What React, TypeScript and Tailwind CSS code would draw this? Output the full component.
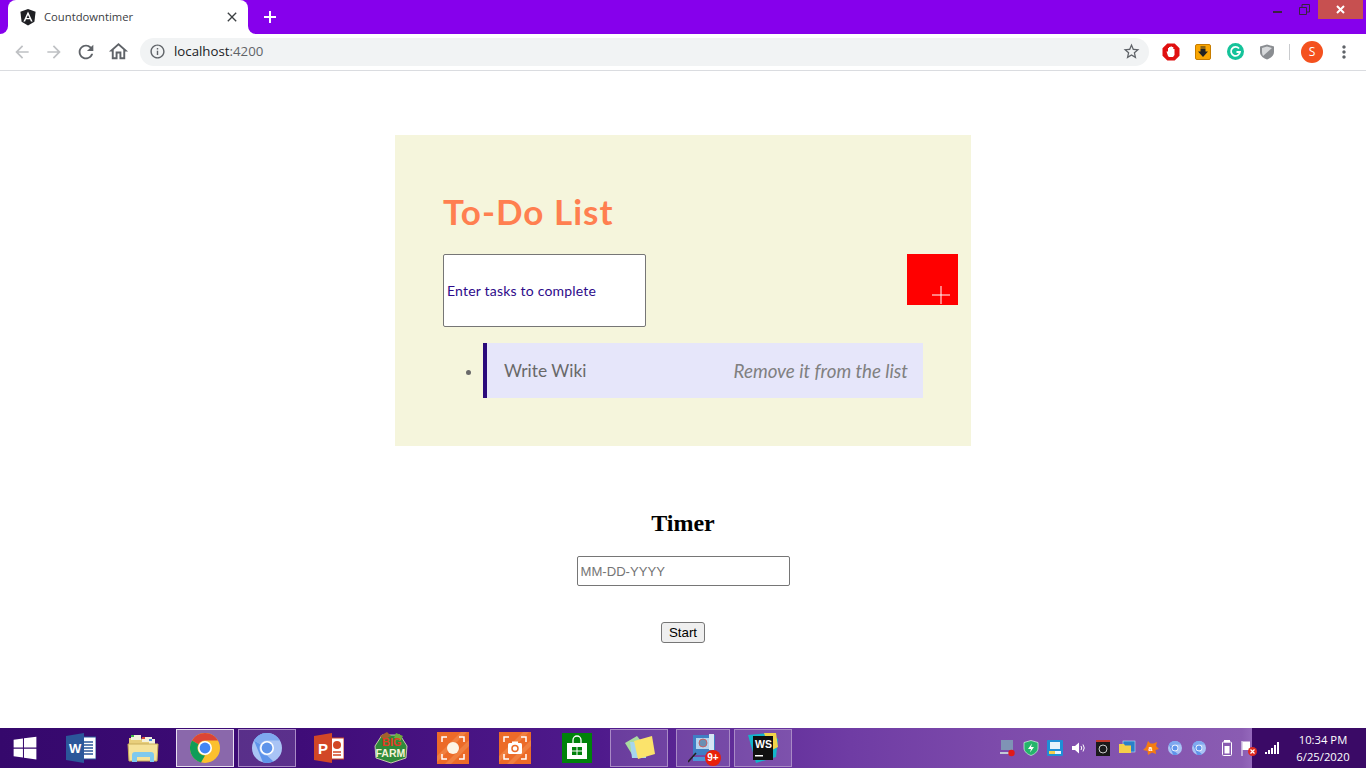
import React from 'react';
import { FaWindows } from 'react-icons/fa';
import {
  MdArrowBack,
  MdArrowForward,
  MdClose,
  MdInfoOutline,
  MdMoreVert,
  MdOutlineHome,
  MdRefresh,
  MdStarBorder,
} from 'react-icons/md';

const comic = "font-['Comic_Sans_MS','Lato','Open_Sans',sans-serif]";

const AngularLogo = () => (
  <svg width="16" height="17" viewBox="0 0 16 17">
    <path d="M8 0 L15.6 2.7 L14.4 12.8 L8 16.6 L1.6 12.8 L0.4 2.7 Z" fill="#1f2024" />
    <path d="M8 2.4 L3.4 12.6 H5.1 L6 10.3 H10 L10.9 12.6 H12.6 Z M8 6 L9.4 9 H6.6 Z" fill="#fff" fillRule="evenodd" />
  </svg>
);

const ChromeIcon = () => (
  <svg width="30" height="30" viewBox="0 0 30 30">
    <circle cx="15" cy="15" r="15" fill="#fbc02d" />
    <path d="M15 0 A15 15 0 0 1 28 7.5 H15 A7.5 7.5 0 0 0 8.5 11.2 L2 7.5 A15 15 0 0 1 15 0 Z" fill="#db4437" />
    <path d="M2 7.5 L8.5 11.2 A7.5 7.5 0 0 0 15 22.5 L11 29.5 A15 15 0 0 1 2 7.5 Z" fill="#0f9d58" />
    <circle cx="15" cy="15" r="7" fill="#fff" />
    <circle cx="15" cy="15" r="5.4" fill="#4285f4" />
  </svg>
);

const ChromiumIcon = ({ size = 30 }: { size?: number }) => (
  <svg width={size} height={size} viewBox="0 0 30 30">
    <circle cx="15" cy="15" r="15" fill="#a9c4f5" />
    <path d="M15 0 A15 15 0 0 0 2 7.5 L11 29.5 A15 15 0 0 0 15 30 A15 15 0 0 0 21.5 28.5 L15 22.5 A7.5 7.5 0 0 1 8.5 11.2 L2 7.5 Z" fill="#5f94ea" />
    <path d="M15 0 A15 15 0 0 1 28 7.5 H15 A7.5 7.5 0 0 0 8.5 11.2 L2 7.5 A15 15 0 0 1 15 0 Z" fill="#7fa9ef" />
    <circle cx="15" cy="15" r="7" fill="#fff" />
    <circle cx="15" cy="15" r="5.4" fill="#5f94ea" />
  </svg>
);

const WordIcon = () => (
  <svg width="30" height="30" viewBox="0 0 30 30">
    <rect x="15" y="4" width="15" height="22" fill="#fff" stroke="#2b579a" />
    <path d="M18 9h9M18 12h9M18 15h9M18 18h9M18 21h9" stroke="#2b579a" strokeWidth="1.4" />
    <path d="M0 3 L18 0 V30 L0 27 Z" fill="#2b579a" />
    <text x="3" y="20" fontSize="13" fontWeight="700" fill="#fff" fontFamily="Liberation Sans">W</text>
  </svg>
);

const PowerPointIcon = () => (
  <svg width="30" height="30" viewBox="0 0 30 30">
    <rect x="15" y="5" width="15" height="21" fill="#fff" stroke="#d24726" />
    <circle cx="23" cy="12" r="4" fill="#d24726" />
    <path d="M19 19h8M19 22h8" stroke="#d24726" strokeWidth="1.4" />
    <path d="M0 3 L18 0 V30 L0 27 Z" fill="#d24726" />
    <text x="4" y="21" fontSize="15" fontWeight="700" fill="#fff" fontFamily="Liberation Sans">P</text>
  </svg>
);

const FolderIcon = () => (
  <svg width="32" height="30" viewBox="0 0 32 30">
    <path d="M2 5 H14 L16 8 H28 V12 H2 Z" fill="#e8cf7c" />
    <rect x="4" y="2" width="10" height="5" fill="#f4f1dc" />
    <rect x="4" y="2" width="3" height="2" fill="#3db54a" />
    <rect x="15" y="4" width="10" height="5" fill="#f4f1dc" />
    <rect x="15" y="4" width="3" height="2" fill="#d8483a" />
    <rect x="22" y="6" width="6" height="5" fill="#f4f1dc" />
    <rect x="22" y="6" width="3" height="2" fill="#4a90e2" />
    <path d="M1 11 H31 L30 28 H2 Z" fill="#f5e29a" stroke="#c9ad5a" />
    <path d="M5 29 V22 Q5 19 8 19 H24 Q27 19 27 22 V29 H23 V24 H10 V29 Z" fill="#7ec9ee" />
  </svg>
);

const BigFarmIcon = () => (
  <svg width="34" height="32" viewBox="0 0 34 32">
    <path d="M8 3 L26 3 L33 14 L32 26 L17 31 L2 26 L1 14 Z" fill="#2f8a3a" stroke="#e9e4c0" strokeWidth="0.8" />
    <path d="M6 4 L13 0 L17 4 L10 8 Z" fill="#a1622a" />
    <path d="M22 1 L29 4 L26 9 L20 6 Z" fill="#6fae3c" />
    <text x="8" y="14" fontSize="11" fontWeight="700" fill="#e53a26" fontFamily="Liberation Sans">BIG</text>
    <text x="1.5" y="25" fontSize="10.5" fontWeight="700" fill="#f6f3d8" fontFamily="Liberation Sans">FARM</text>
  </svg>
);

const RecorderIcon = ({ camera }: { camera?: boolean }) => (
  <svg width="32" height="32" viewBox="0 0 32 32">
    <rect width="32" height="32" fill="#ec6b28" />
    <path d="M0 24 L24 0 H30 L0 30 Z M8 32 L32 8 V14 L14 32 Z" fill="#f08040" />
    <path d="M5 10 V5 H10 M22 5 H27 V10 M27 22 V27 H22 M10 27 H5 V22" fill="none" stroke="#fff" strokeWidth="1.5" />
    {camera ? (
      <>
        <rect x="9" y="11" width="14" height="11" rx="1.5" fill="#fff" />
        <rect x="13" y="9.5" width="6" height="3" fill="#fff" />
        <circle cx="16" cy="16.5" r="3" fill="none" stroke="#ec6b28" strokeWidth="1.5" />
      </>
    ) : (
      <circle cx="16" cy="16" r="6" fill="#fdf5e6" />
    )}
  </svg>
);

const StoreIcon = () => (
  <svg width="30" height="30" viewBox="0 0 30 30">
    <rect width="30" height="30" fill="#00820a" />
    <path d="M11 10 V7 A4 4 0 0 1 19 7 V10" fill="none" stroke="#fff" strokeWidth="1.3" />
    <path d="M5 10 H25 V26 H5 Z" fill="#fff" />
    <path d="M10 14 H14.5 V17.5 H10 Z M15.5 14 H20 V17.5 H15.5 Z M10 18.5 H14.5 V22 H10 Z M15.5 18.5 H20 V22 H15.5 Z" fill="#00820a" />
  </svg>
);

const StickyIcon = () => (
  <svg width="32" height="28" viewBox="0 0 32 28">
    <path d="M2 9 L14 2 L22 12 L10 22 Z" fill="#a9dba0" />
    <path d="M7 8 H23 V24 H9 Z" fill="#a7d6ee" />
    <path d="M11 7 L29 2 L32 20 L15 25 Z" fill="#fbe36b" />
  </svg>
);

const ToolsIcon = () => (
  <div className="relative w-[30px] h-[30px]">
    <svg width="30" height="30" viewBox="0 0 30 30">
      <rect x="5" y="2" width="22" height="20" fill="#3f7fc4" />
      <rect x="8" y="5" width="14" height="11" fill="#b3d4ef" />
      <circle cx="15" cy="10" r="4" fill="#6a8fb3" stroke="#d9534f" strokeWidth="0.8" />
      <rect x="21" y="1" width="5" height="16" fill="#d7e6f3" />
      <path d="M0 29 L8 20" stroke="#222" strokeWidth="1.6" />
      <path d="M5 24 H28 V28 H5 Z" fill="#4e95d6" />
    </svg>
    <span className="absolute right-[-3px] bottom-[-3px] w-[16px] h-[16px] rounded-full bg-[#e8210b] flex items-center justify-center text-white text-[10px] font-bold font-['Liberation_Sans',sans-serif] leading-none">
      9+
    </span>
  </div>
);

const WebStormIcon = () => (
  <svg width="30" height="30" viewBox="0 0 30 30">
    <path d="M0 2 L22 0 L30 6 L28 24 L8 30 Z" fill="#13b6c9" />
    <path d="M16 0 H28 L30 14 L22 18 Z" fill="#f2d34a" />
    <rect x="5" y="3" width="20" height="24" fill="#101010" />
    <text x="7" y="15" fontSize="10.5" fontWeight="700" fill="#fff" fontFamily="Liberation Sans">WS</text>
    <rect x="7" y="22" width="8" height="1.5" fill="#fff" />
  </svg>
);

const AbpIcon = () => (
  <svg width="18" height="18" viewBox="0 0 18 18">
    <path d="M5.3 0.5 H12.7 L17.5 5.3 V12.7 L12.7 17.5 H5.3 L0.5 12.7 V5.3 Z" fill="#e01010" />
    <path d="M6 13 L4.5 8.5 L6 8.5 V5 H7 V4 H8.5 V3.5 H10 V4 H11.3 V6 H12.5 V12 L11 14 H7 Z" fill="#fff" />
  </svg>
);

const DownloaderIcon = () => (
  <svg width="16" height="16" viewBox="0 0 16 16">
    <rect x="0.5" y="0.5" width="15" height="15" rx="1.5" fill="#f9a602" stroke="#c77d00" />
    <path d="M5.5 2.5 H10.5 V3.5 H5.5 Z M5.5 4.5 H10.5 V7.5 H13 L8 13 L3 7.5 H5.5 Z" fill="#222" />
  </svg>
);

const GrammarlyIcon = () => (
  <svg width="17" height="17" viewBox="0 0 17 17">
    <circle cx="8.5" cy="8.5" r="8.5" fill="#15c39a" />
    <path d="M12 5.5 A4.5 4.5 0 1 0 13 9 H9.5" fill="none" stroke="#fff" strokeWidth="1.8" />
  </svg>
);

const ShieldIcon = ({ size = 16, fill = '#8a8d91' }: { size?: number; fill?: string }) => (
  <svg width={size} height={size} viewBox="0 0 16 16">
    <path d="M8 0.5 L15 2.5 V8 C15 12 11 14.5 8 15.5 C5 14.5 1 12 1 8 V2.5 Z" fill={fill} />
    <path d="M8 2.5 L13 4 L4 12 Q3 10 3 8 V4 Z" fill="#d7d9db" />
  </svg>
);

const trayIcons = [
  <svg key="a" width="18" height="18" viewBox="0 0 18 18">
    <rect x="3" y="1" width="12" height="10" fill="#7f93b5" />
    <path d="M2 13 H12 V15 H2 Z" fill="#c2c9d6" />
    <circle cx="13.5" cy="14" r="3.2" fill="#e11919" />
  </svg>,
  <svg key="b" width="16" height="16" viewBox="0 0 16 16">
    <path d="M8 0.5 L15 2.5 V8 C15 12 11 14.5 8 15.5 C5 14.5 1 12 1 8 V2.5 Z" fill="#24b56b" stroke="#d6f5e4" strokeWidth="0.7" />
    <path d="M9 3.5 L5 9 H8 L7 12.5 L11 7 H8 Z" fill="#fff" />
  </svg>,
  <svg key="c" width="16" height="16" viewBox="0 0 16 16">
    <rect width="16" height="16" rx="1" fill="#1f8fd6" />
    <rect x="3" y="2" width="10" height="7" fill="#e5f3fb" />
    <path d="M2 11 H14 V14 H2 Z" fill="#f3d04e" />
    <path d="M8 11 H14 V14 H8 Z" fill="#e5f3fb" />
  </svg>,
  <svg key="d" width="16" height="16" viewBox="0 0 16 16" fill="none" stroke="#fff">
    <path d="M1 6 H4 L8 2.5 V13.5 L4 10 H1 Z" fill="#fff" stroke="none" />
    <path d="M10 6 Q11.5 8 10 10 M12 4.5 Q14.5 8 12 11.5" strokeWidth="1" />
  </svg>,
  <svg key="e" width="14" height="16" viewBox="0 0 14 16">
    <rect width="14" height="16" fill="#1a1a1a" />
    <rect width="14" height="2" fill="#c0392b" />
    <circle cx="7" cy="9" r="4" fill="none" stroke="#c8c8c8" strokeWidth="1" />
  </svg>,
  <svg key="f" width="18" height="16" viewBox="0 0 18 16">
    <rect x="5" y="1" width="12" height="11" fill="#2a7fc9" stroke="#bfe0f5" strokeWidth="0.6" />
    <path d="M1 4 H6 L7 5.5 H13 V13 H1 Z" fill="#f5cf4a" />
  </svg>,
  <svg key="g" width="16" height="16" viewBox="0 0 16 16">
    <path d="M5 1 L7.5 3.5 H10.5 L14 2 L13 6 L16 9 L12.5 10 L13 14 L9 12.5 L5 15 L4.5 11 L0 10 L3 7 Z" fill="#f57c12" />
    <text x="5.4" y="10.5" fontSize="7" fontWeight="700" fill="#fff" fontFamily="Liberation Sans">a</text>
  </svg>,
  <ChromiumIcon key="h" size={14} />,
  <ChromiumIcon key="i" size={14} />,
];

const TaskSlot = ({ children, boxed, active, className = 'w-[58px] mx-[2px]' }: { children: React.ReactNode; boxed?: boolean; active?: boolean; className?: string }) => (
  <div
    className={`h-[38px] shrink-0 flex items-center justify-center border ${className} ${
      active
        ? 'border-[#e8dff0] bg-[#8a68ab]'
        : boxed
          ? 'border-[#a98ac6] bg-white/15'
          : 'border-transparent'
    }`}
  >
    {children}
  </div>
);

export default function App() {
  return (
    <div className="h-screen w-[1366px] overflow-hidden flex flex-col bg-white font-['Liberation_Sans',sans-serif]">
      {/* Tab strip */}
      <div className="h-[34px] shrink-0 bg-[#8600ec] flex items-stretch relative">
        <div className="relative ml-[8px] w-[240px] bg-white rounded-t-[8px] flex items-center pl-[12px] pr-[8px]">
          <span className="absolute left-[-8px] bottom-0 w-[8px] h-[8px] bg-white">
            <span className="block w-full h-full bg-[#8600ec] rounded-br-[8px]" />
          </span>
          <span className="absolute right-[-8px] bottom-0 w-[8px] h-[8px] bg-white">
            <span className="block w-full h-full bg-[#8600ec] rounded-bl-[8px]" />
          </span>
          <AngularLogo />
          <span className="ml-[8px] flex-1 text-[11.25px] text-[#3c4043] font-['Open_Sans',sans-serif]">Countdowntimer</span>
          <MdClose size={16} className="text-[#3c4043]" />
        </div>
        <div className="ml-[13px] mt-[8px] w-[18px] h-[18px] flex items-center justify-center">
          <svg width="12" height="12" viewBox="0 0 12 12">
            <path d="M6 0 V12 M0 6 H12" stroke="#fff" strokeWidth="2" />
          </svg>
        </div>
        {/* Window controls */}
        <div className="ml-auto flex items-start">
          <div className="w-[25px] h-[19px] flex items-center justify-center pt-[5px] pr-[8px]">
            <span className="block w-[9px] h-[2px] bg-[#3a2340]" />
          </div>
          <div className="w-[24px] h-[19px] flex items-center justify-center pr-[4px]">
            <svg width="11" height="11" viewBox="0 0 11 11" fill="none" stroke="#3a2340">
              <path d="M0.5 3.5 H7.5 V10.5 H0.5 Z M3 3 V0.5 H10.5 V8 H8" />
            </svg>
          </div>
          <div className="w-[45px] h-[19px] bg-[#c75050] flex items-center justify-center">
            <svg width="9" height="9" viewBox="0 0 9 9">
              <path d="M1 1 L8 8 M8 1 L1 8" stroke="#fff" strokeWidth="2" />
            </svg>
          </div>
          <div className="w-[3px]" />
        </div>
      </div>

      {/* Toolbar */}
      <div className="h-[37px] shrink-0 flex items-center pl-[6px] pb-[1px] border-b border-[#dadce0]">
        <div className="w-[32px] flex justify-center"><MdArrowBack size={20} className="text-[#bfc1c4]" /></div>
        <div className="w-[32px] flex justify-center"><MdArrowForward size={20} className="text-[#bfc1c4]" /></div>
        <div className="w-[32px] flex justify-center"><MdRefresh size={22} className="text-[#5f6368]" /></div>
        <div className="w-[32px] flex justify-center"><MdOutlineHome size={23} className="text-[#5f6368]" /></div>
        <div className="ml-[6px] w-[1009px] h-[28px] rounded-full bg-[#f1f3f4] flex items-center pl-[9px] pr-[8px]">
          <MdInfoOutline size={17} className="text-[#5f6368]" />
          <span className="ml-[8px] flex-1 pt-[1px] text-[13.25px] text-[#202124] font-['Open_Sans',sans-serif]">
            localhost<span className="text-[#5f6368]">:4200</span>
          </span>
          <MdStarBorder size={19} className="text-[#5f6368]" />
        </div>
        <div className="ml-[6px] w-[32px] flex justify-center"><AbpIcon /></div>
        <div className="w-[32px] flex justify-center"><DownloaderIcon /></div>
        <div className="w-[32px] flex justify-center"><GrammarlyIcon /></div>
        <div className="w-[32px] flex justify-center"><ShieldIcon /></div>
        <div className="ml-[6px] w-px h-[16px] bg-[#c9cbce]" />
        <div className="ml-[11px] w-[22px] h-[22px] rounded-full bg-[#f4511e] flex items-center justify-center text-white text-[12px] font-['Open_Sans',sans-serif]">S</div>
        <div className="ml-[10px] w-[22px] flex justify-center"><MdMoreVert size={20} className="text-[#5f6368]" /></div>
      </div>

      {/* Page */}
      <div className="flex-1 flex flex-col items-center pt-[64px]">
        <section className={`w-[576px] h-[311px] bg-[#f5f5dc] pt-[54px] ${comic}`}>
          <h1 className="ml-[48px] h-[44px] leading-[44px] text-[35px] tracking-[1px] font-bold text-[#ff7f50]">To-Do List</h1>
          <div className="mt-[21px] pl-[48px] pr-[13px] h-[73px] flex justify-between items-start">
            <input
              placeholder="Enter tasks to complete"
              className="w-[203px] h-[73px] pl-[3px] pb-[1px] bg-white border border-[#767676] rounded-[2px] text-[14px] tracking-[0.2px] outline-none placeholder:text-[#2d0a8a]"
            />
            <button className="w-[51px] h-[51px] bg-[#ff0000] flex items-end justify-end pr-[8px] pb-[1px]">
              <svg width="18" height="18" viewBox="0 0 18 18">
                <path d="M9 0 V18 M0 9 H18" stroke="#fff" strokeWidth="1" />
              </svg>
            </button>
          </div>
          <ul className="mt-[16px] ml-[88px] mr-[48px] list-disc marker:text-[#696969]">
            <li>
              <div className="h-[55px] bg-[#e6e6fa] border-l-4 border-[#2a0a7a] flex items-center justify-between pl-[17px] pr-[15px] pt-[2px]">
                <span className="text-[17.4px] text-[#696969]">Write Wiki</span>
                <span className="text-[18.75px] italic text-[#808080]">Remove it from the list</span>
              </div>
            </li>
          </ul>
        </section>

        <h2 className="mt-[63px] h-[28px] leading-[28px] text-[24px] font-bold text-black font-['Liberation_Serif',serif]">Timer</h2>
        <input
          placeholder="MM-DD-YYYY"
          className="mt-[19px] w-[213px] h-[30px] px-[3px] bg-white border border-[#767676] rounded-[2px] text-[13.1px] outline-none placeholder:text-[#757575]"
        />
        <button className="mt-[36px] w-[44px] h-[21px] bg-[#efefef] border border-[#767676] rounded-[3px] text-[13.33px] leading-none text-black">Start</button>
      </div>

      {/* Taskbar */}
      <div className="h-[40px] shrink-0 flex items-center bg-[linear-gradient(90deg,#35086c_0,#3f0c78_300px,#4f1a8c_600px,#6f3ca4_850px,#7d4bab_1000px,#8a5cb2_1242px,#9468bb_1252px,#3a0a66_1252px,#3a0a66_1366px)]">
        <div className="w-[50px] shrink-0 flex justify-center"><FaWindows size={26} className="text-white" /></div>
        <TaskSlot><WordIcon /></TaskSlot>
        <TaskSlot><FolderIcon /></TaskSlot>
        <TaskSlot active><ChromeIcon /></TaskSlot>
        <TaskSlot boxed><ChromiumIcon /></TaskSlot>
        <TaskSlot><PowerPointIcon /></TaskSlot>
        <TaskSlot><BigFarmIcon /></TaskSlot>
        <TaskSlot><RecorderIcon /></TaskSlot>
        <TaskSlot><RecorderIcon camera /></TaskSlot>
        <TaskSlot><StoreIcon /></TaskSlot>
        <TaskSlot boxed><StickyIcon /></TaskSlot>
        <TaskSlot boxed className="w-[54px] ml-[6px] mr-[4px]"><ToolsIcon /></TaskSlot>
        <TaskSlot boxed className="w-[58px] mx-[0px]"><WebStormIcon /></TaskSlot>

        {/* Tray */}
        <div className="ml-[203px] shrink-0 flex items-center">
          {trayIcons.map((icon) => (
            <div key={icon.key} className="w-[24px] flex justify-center">{icon}</div>
          ))}
          <div className="ml-[4px] w-[24px] flex justify-center">
            <svg width="10" height="16" viewBox="0 0 10 16" fill="none" stroke="#fff">
              <rect x="0.5" y="2" width="9" height="13.5" rx="1" />
              <rect x="2.5" y="0.5" width="5" height="1.5" fill="#fff" />
              <rect x="2.5" y="6" width="5" height="7.5" fill="#fff" stroke="none" />
            </svg>
          </div>
          <div className="w-[20px] flex justify-center">
            <svg width="18" height="18" viewBox="0 0 18 18">
              <path d="M2 2 V17" stroke="#fff" />
              <path d="M2.5 2.5 H10 V11 H2.5 Z" fill="#fff" />
              <circle cx="12.5" cy="12.5" r="4.5" fill="#e02b20" />
              <path d="M10.5 10.5 L14.5 14.5 M14.5 10.5 L10.5 14.5" stroke="#fff" strokeWidth="1.2" />
            </svg>
          </div>
          <div className="w-[26px] flex justify-center">
            <svg width="15" height="12" viewBox="0 0 15 12" fill="#fff">
              <rect x="0" y="10" width="2" height="2" />
              <rect x="3" y="8" width="2" height="4" />
              <rect x="6" y="6" width="2" height="6" />
              <rect x="9" y="3" width="2" height="9" />
              <rect x="12" y="0" width="2" height="12" />
            </svg>
          </div>
        </div>
        <div className="w-[76px] shrink-0 text-center text-white text-[11.25px] leading-[17px] font-['Open_Sans',sans-serif]">
          <div>10:34 PM</div>
          <div>6/25/2020</div>
        </div>
      </div>
    </div>
  );
}
